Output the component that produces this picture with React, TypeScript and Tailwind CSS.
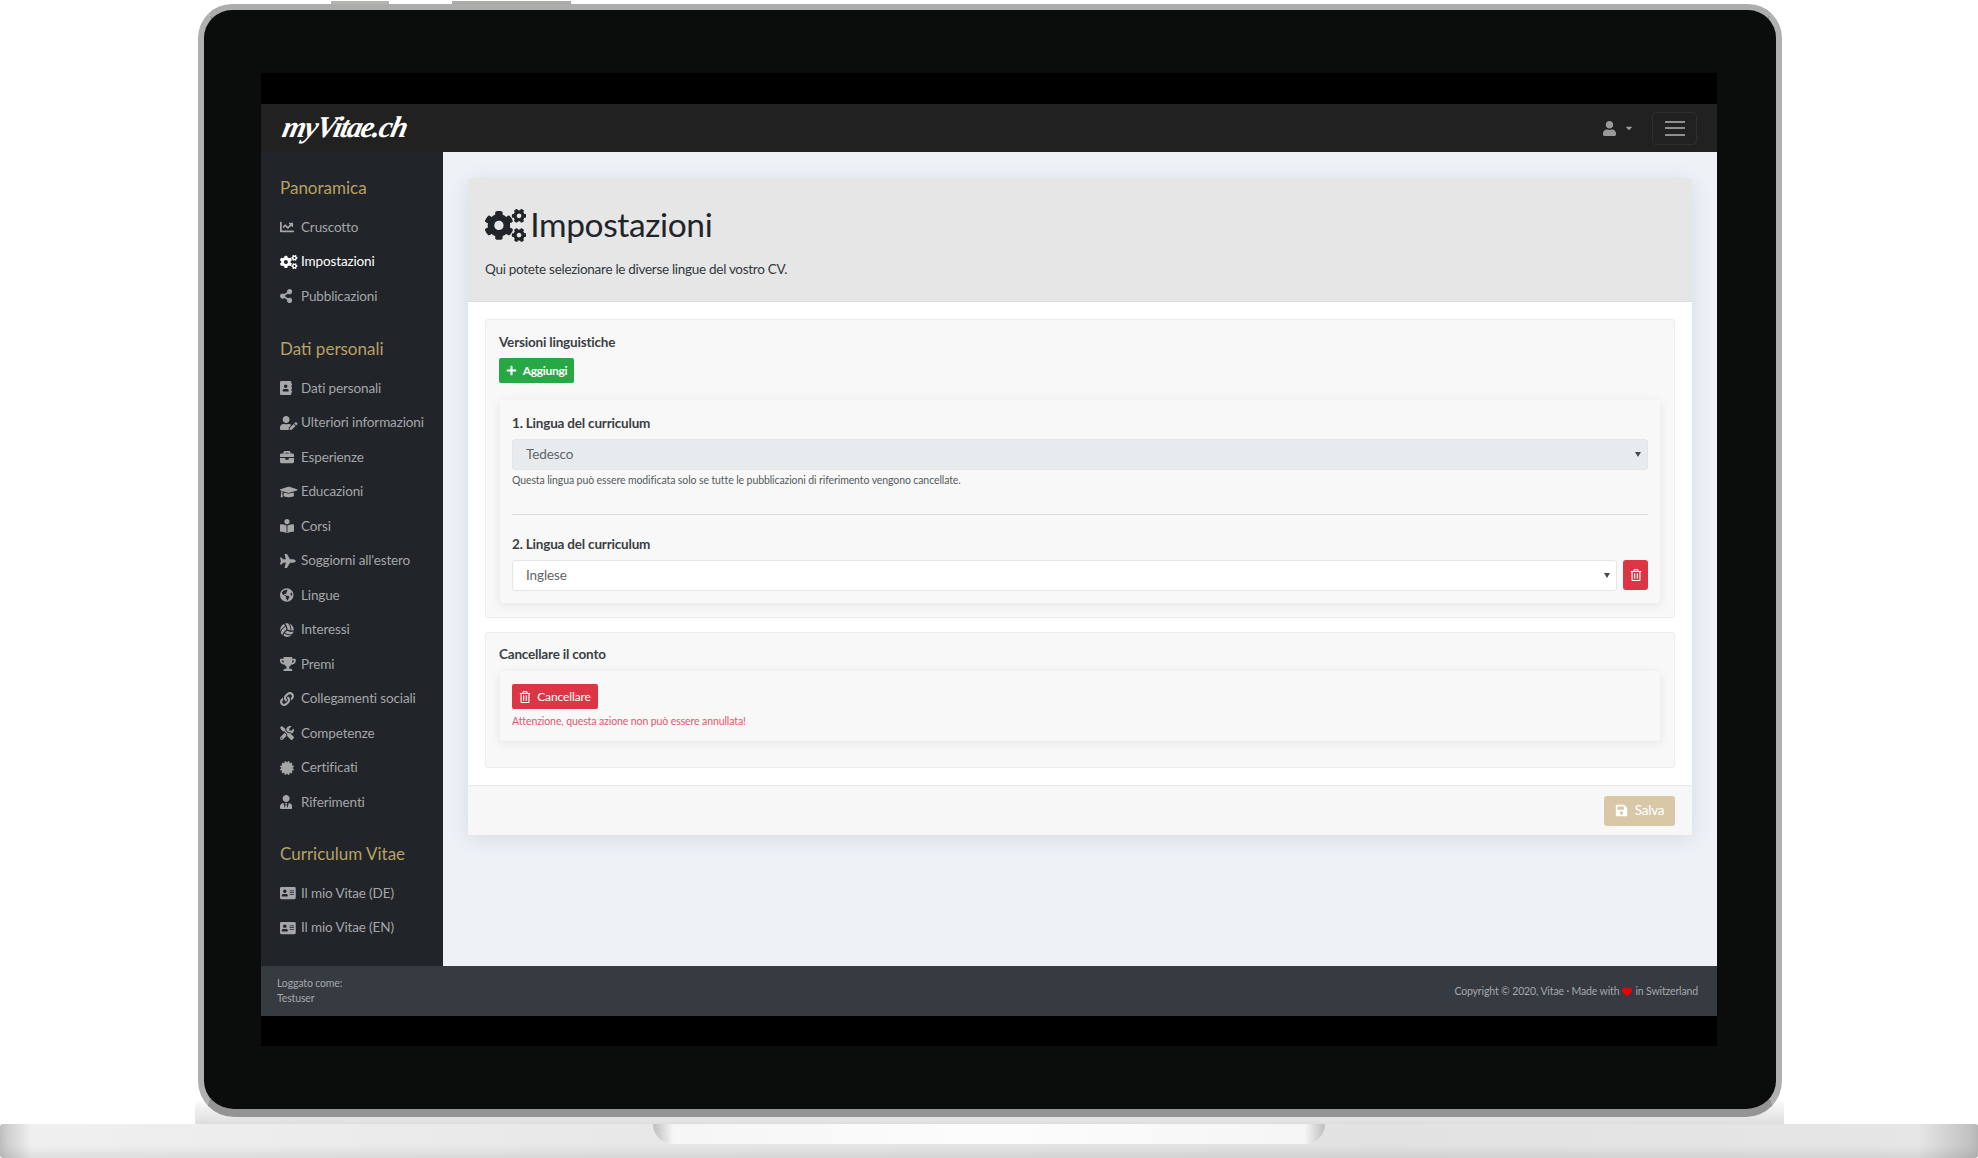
import React from "react";
import {
  FaChartLine, FaCogs, FaShareAlt, FaAddressBook, FaUserEdit, FaBriefcase, FaGraduationCap,
  FaBookReader, FaPlane, FaGlobeAmericas, FaVolleyballBall, FaTrophy, FaLink, FaTools,
  FaCertificate, FaUserTie, FaAddressCard, FaUser, FaPlus, FaRegTrashAlt, FaSave, FaHeart, FaCaretDown,
} from "react-icons/fa";

type Item = { icon: React.ComponentType<{ className?: string }>; label: string; size: string; active?: boolean };

const overview: Item[] = [
  { icon: FaChartLine, label: "Cruscotto", size: "w-[14px]" },
  { icon: FaCogs, label: "Impostazioni", size: "w-[17.5px]", active: true },
  { icon: FaShareAlt, label: "Pubblicazioni", size: "w-[12.25px]" },
];
const personal: Item[] = [
  { icon: FaAddressBook, label: "Dati personali", size: "w-[12.25px]" },
  { icon: FaUserEdit, label: "Ulteriori informazioni", size: "w-[17.5px]" },
  { icon: FaBriefcase, label: "Esperienze", size: "w-[14px]" },
  { icon: FaGraduationCap, label: "Educazioni", size: "w-[17.5px]" },
  { icon: FaBookReader, label: "Corsi", size: "w-[14px]" },
  { icon: FaPlane, label: "Soggiorni all'estero", size: "w-[15.75px]" },
  { icon: FaGlobeAmericas, label: "Lingue", size: "w-[13.5px]" },
  { icon: FaVolleyballBall, label: "Interessi", size: "w-[14px]" },
  { icon: FaTrophy, label: "Premi", size: "w-[15.75px]" },
  { icon: FaLink, label: "Collegamenti sociali", size: "w-[14px]" },
  { icon: FaTools, label: "Competenze", size: "w-[14px]" },
  { icon: FaCertificate, label: "Certificati", size: "w-[14px]" },
  { icon: FaUserTie, label: "Riferimenti", size: "w-[12.25px]" },
];
const vitae: Item[] = [
  { icon: FaAddressCard, label: "Il mio Vitae (DE)", size: "w-[15.75px]" },
  { icon: FaAddressCard, label: "Il mio Vitae (EN)", size: "w-[15.75px]" },
];

function NavList({ items }: { items: Item[] }) {
  return (
    <ul>
      {items.map((it) => (
        <li
          key={it.label}
          className={`flex h-[34.5px] items-center text-[13.5px] tracking-[-0.13px] ${it.active ? "text-white" : "text-[#a4a6a8]"}`}
        >
          <span className="flex w-[21px] shrink-0 items-center">
            <it.icon className={`h-[14px] ${it.size}`} />
          </span>
          <span className="pb-[1px]">{it.label}</span>
        </li>
      ))}
    </ul>
  );
}

function Heading({ children, className = "" }: { children: React.ReactNode; className?: string }) {
  return (
    <h2 className={`mb-[10px] flex h-[24px] items-center pb-[1px] text-[17px] leading-none text-[#b9a063] ${className}`}>
      {children}
    </h2>
  );
}

function SelectBox({ value, disabled }: { value: string; disabled?: boolean }) {
  return (
    <div
      className={`flex h-[31px] flex-1 items-center justify-between rounded-[3px] border border-[#e2e6ea] pl-[13px] pr-[6px] text-[13.5px] tracking-[-0.1px] text-[#5f6468] ${
        disabled ? "bg-[#e8ebee]" : "bg-white"
      }`}
    >
      <span>{value}</span>
      <span className="h-0 w-0 border-x-[3px] border-t-[5px] border-x-transparent border-t-[#444a50]" />
    </div>
  );
}

const labelCls = "block h-[20px] text-[13.5px] font-bold leading-[20px] tracking-[-0.19px] text-[#3a3f44]";

export default function App() {
  return (
    <div className="relative flex h-[1158px] w-[1978px] flex-col overflow-hidden bg-white font-['Lato',sans-serif]">
      {/* top tabs */}
      <div className="flex h-[4px] pl-[331px] pt-[1px]">
        <div className="h-[3px] w-[58px] bg-[#b4b4b0]" />
        <div className="ml-[63px] h-[3px] w-[119px] bg-[#ababa8]" />
      </div>

      {/* lid */}
      <div className="relative z-10 ml-[198px] h-[1113px] w-[1584px] rounded-t-[34px] rounded-b-[36px] border-x-[6px] border-t-[6px] border-b-[8px] border-x-[#b0b0b0] border-t-[#acacac] border-b-[#949494] bg-[#0a0d0c] pl-[57px] pt-[63px]">
        <div className="flex h-[973px] w-[1456px] flex-col bg-black pb-[30px] pt-[31px]">
          {/* navbar */}
          <header className="flex h-[48px] shrink-0 items-center justify-between bg-[#212121] pl-[22px] pr-[20px]">
            <span className="-skew-x-12 pb-[2px] font-['Liberation_Serif',serif] text-[30px] font-bold italic leading-none tracking-[-1.4px] text-white">
              myVitae.ch
            </span>
            <div className="flex items-center">
              <FaUser className="h-[15px] w-[13px] text-[#9a9a9a]" />
              <FaCaretDown className="ml-[8px] mr-[18px] text-[10px] text-[#9a9a9a]" />
              <div className="flex h-[33px] w-[45px] flex-col items-center justify-center gap-[4.5px] rounded-[4px] border border-[#2f2f2f]">
                <span className="h-[2px] w-[20px] bg-[#8f8f8f]" />
                <span className="h-[2px] w-[20px] bg-[#8f8f8f]" />
                <span className="h-[2px] w-[20px] bg-[#8f8f8f]" />
              </div>
            </div>
          </header>

          <div className="flex h-[814px] shrink-0">
            {/* sidebar */}
            <aside className="w-[182px] shrink-0 bg-[#212529] pl-[19px] pt-[24px]">
              <Heading>Panoramica</Heading>
              <NavList items={overview} />
              <Heading className="mt-[23.5px]">Dati personali</Heading>
              <NavList items={personal} />
              <Heading className="mt-[22.5px]">Curriculum Vitae</Heading>
              <NavList items={vitae} />
            </aside>

            {/* main */}
            <main className="flex-1 bg-[#eef2f7] px-[25px] pt-[26px]">
              <section className="rounded-[3px] bg-white shadow-[0_4px_20px_rgba(60,70,90,0.13)]">
                <div className="h-[124px] rounded-t-[3px] border-b border-[#dedede] bg-[#e6e6e6] px-[17px] pt-[26px]">
                  <div className="flex h-[42px] items-center text-[#212529]">
                    <FaCogs className="h-[33px] w-[41.25px]" />
                    <h1 className="ml-[4px] text-[33.5px] leading-none tracking-[-0.37px]">Impostazioni</h1>
                  </div>
                  <p className="mt-[13px] text-[13.5px] leading-[20px] tracking-[-0.29px] text-[#33383d]">
                    Qui potete selezionare le diverse lingue del vostro CV.
                  </p>
                </div>

                <div className="h-[483px] px-[17px] pt-[17px]">
                  <div className="h-[299px] rounded-[3px] border border-[#ececec] bg-[#f8f8f8] pl-[13px] pr-[14px] pt-[12px]">
                    <h3 className={labelCls}>Versioni linguistiche</h3>
                    <button className="mt-[6px] flex h-[25px] w-[75px] items-center justify-center gap-[6px] rounded-[2px] bg-[#28a745] text-[12px] font-bold tracking-[-0.3px] text-white">
                      <FaPlus className="text-[11px]" />
                      Aggiungi
                    </button>
                    <div className="ml-[1px] mt-[17px] h-[203px] rounded-[3px] bg-[#f8f8f8] px-[12px] pt-[13px] shadow-[0_2px_10px_rgba(60,70,90,0.11)]">
                      <label className={labelCls}>1. Lingua del curriculum</label>
                      <div className="mt-[6px] flex">
                        <SelectBox value="Tedesco" disabled />
                      </div>
                      <p className="mt-[2px] text-[10.5px] leading-[16px] tracking-[-0.1px] text-[#555a5f]">
                        Questa lingua può essere modificata solo se tutte le pubblicazioni di riferimento vengono cancellate.
                      </p>
                      <hr className="mt-[26px] border-t border-[#dcdcdc]" />
                      <label className={`${labelCls} mt-[19px]`}>2. Lingua del curriculum</label>
                      <div className="mt-[6px] flex gap-[6px]">
                        <SelectBox value="Inglese" />
                        <button className="flex h-[30px] w-[25px] items-center justify-center rounded-[3px] bg-[#dc3545] text-white">
                          <FaRegTrashAlt className="text-[12px]" />
                        </button>
                      </div>
                    </div>
                  </div>

                  <div className="mt-[14px] h-[136px] rounded-[3px] border border-[#ececec] bg-[#f8f8f8] pl-[13px] pr-[14px] pt-[11px]">
                    <h3 className={labelCls}>Cancellare il conto</h3>
                    <div className="ml-[1px] mt-[7px] h-[70px] rounded-[3px] bg-[#f8f8f8] px-[12px] pt-[13px] shadow-[0_2px_10px_rgba(60,70,90,0.11)]">
                      <button className="flex h-[25px] w-[86px] items-center justify-center gap-[6px] rounded-[2px] bg-[#dc3545] text-[12px] tracking-[-0.1px] text-white">
                        <FaRegTrashAlt className="text-[12px]" />
                        Cancellare
                      </button>
                      <p className="mt-[4px] text-[10.5px] leading-[16px] tracking-[-0.1px] text-[#e4566a]">
                        Attenzione, questa azione non può essere annullata!
                      </p>
                    </div>
                  </div>
                </div>

                <div className="flex h-[50px] items-center justify-end rounded-b-[3px] border-t border-[#e8e8e8] bg-[#f7f7f7] pr-[17px]">
                  <button className="flex h-[30px] w-[71px] items-center justify-center gap-[7px] rounded-[3px] bg-[#d8c8a8] text-[13.5px] tracking-[-0.2px] text-white">
                    <FaSave className="text-[13px]" />
                    Salva
                  </button>
                </div>
              </section>
            </main>
          </div>

          {/* footer */}
          <footer className="flex h-[50px] shrink-0 items-center justify-between bg-[#363a41] pl-[16px] pr-[19px] text-[10.5px] tracking-[-0.14px] text-[#a5a8ac]">
            <div className="pb-[1px] leading-[15px]">
              Loggato come:
              <br />
              Testuser
            </div>
            <div className="flex items-center pt-[1px]">
              Copyright © 2020, Vitae · Made with
              <FaHeart className="mx-[3px] text-[10px] text-[#f00000]" />
              in Switzerland
            </div>
          </footer>
        </div>
      </div>

      {/* hinge */}
      <div className="-mt-[16px] ml-[195px] h-[23px] w-[1589px] rounded-t-[5px] bg-gradient-to-b from-[#fafafa] to-[#dedede]" />

      {/* base */}
      <div className="flex h-[34px] w-full justify-center rounded-[3px] bg-[linear-gradient(90deg,#c4c4c4_0%,#f0f0f0_1.6%,#e8e8e8_30%,#e2e2e2_70%,#e6e6e6_97%,#bcbcbc_100%)] shadow-[inset_0_-7px_8px_rgba(0,0,0,0.07)]">
        <div className="h-[20px] w-[672px] rounded-b-[22px] bg-[linear-gradient(90deg,#bdbdbd_0%,#f6f6f6_3%,#fcfcfc_50%,#f6f6f6_97%,#bdbdbd_100%)]" />
      </div>
    </div>
  );
}
